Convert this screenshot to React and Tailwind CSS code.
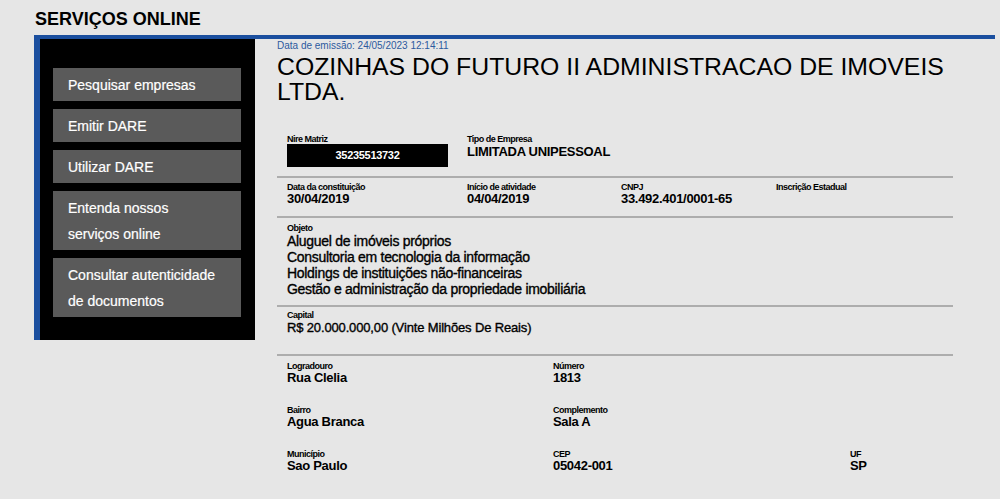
import React from 'react';

const menu = [
  ['Pesquisar empresas'],
  ['Emitir DARE'],
  ['Utilizar DARE'],
  ['Entenda nossos', 'serviços online'],
  ['Consultar autenticidade', 'de documentos'],
];

const objeto = [
  'Aluguel de imóveis próprios',
  'Consultoria em tecnologia da informação',
  'Holdings de instituições não-financeiras',
  'Gestão e administração da propriedade imobiliária',
];

function Label({ children }) {
  return <div className="text-[9px] leading-[10px] font-bold tracking-[-0.5px] text-black">{children}</div>;
}

function Field({ label, value, w }) {
  return (
    <div className={w}>
      <Label>{label}</Label>
      <div className="text-[13px] leading-[13px] font-bold tracking-[-0.3px] text-black h-[13px]">{value}</div>
    </div>
  );
}

export default function App() {
  const sec = 'border-t-2 border-[#adadad] px-[10px]';

  return (
    <div className="min-h-screen bg-[#e6e6e6] font-['Liberation_Sans',Arial,Helvetica,sans-serif] text-black">
      <h1 className="pl-[35px] pt-[9px] mb-[6px] text-[18px] leading-[20px] font-bold">SERVIÇOS ONLINE</h1>

      <div className="ml-[34px] w-[961px] border-t-4 border-[#1b4f9f] flex items-start">
        {/* Sidebar */}
        <div className="w-[221px] shrink-0 border-l-[6px] border-[#1b4f9f] bg-black pt-[29px] pb-[23px] pl-[13px] pr-[14px] flex flex-col gap-[8px]">
          {menu.map((m, i) => (
            <div key={i} className="bg-[#5a5a5a] text-white text-[14px] leading-[26px] pl-[15px] pt-[4px] pb-[3px] [-webkit-text-stroke:0.2px_white]">
              {m.map((l, j) => <div key={j}>{l}</div>)}
            </div>
          ))}
        </div>

        {/* Conteudo */}
        <div className="ml-[22px] w-[676px] pt-[1px]">
          <div className="text-[10px] leading-[12px] text-[#2d5a9e]">Data de emissão: 24/05/2023 12:14:11</div>
          <div className="mt-[2px] text-[24.8px] leading-[25px]">COZINHAS DO FUTURO II ADMINISTRACAO DE IMOVEIS LTDA.</div>

          <div className="px-[10px] pt-[30px] pb-[9px] flex">
            <div className="w-[180px]">
              <Label>Nire Matriz</Label>
              <div className="w-[161px] h-[23px] bg-black text-white text-[11px] font-bold tracking-[-0.3px] flex items-center justify-center">35235513732</div>
            </div>
            <div>
              <Label>Tipo de Empresa</Label>
              <div className="text-[13px] leading-[15px] font-bold tracking-[-0.3px]">LIMITADA UNIPESSOAL</div>
            </div>
          </div>

          <div className={`${sec} pt-[4px] pb-[11px] flex`}>
            <Field w="w-[180px]" label="Data da constituição" value="30/04/2019" />
            <Field w="w-[154px]" label="Início de atividade" value="04/04/2019" />
            <Field w="w-[155px]" label="CNPJ" value="33.492.401/0001-65" />
            <Field w="" label="Inscrição Estadual" value="" />
          </div>

          <div className={`${sec} pt-[5px] pb-[8px]`}>
            <Label>Objeto</Label>
            {objeto.map(o => (
              <div key={o} className="text-[14px] leading-[16px] tracking-[-0.3px] [-webkit-text-stroke:0.35px_black]">{o}</div>
            ))}
          </div>

          <div className={`${sec} pt-[3px] pb-[19px]`}>
            <Label>Capital</Label>
            <div className="text-[13px] leading-[15px] tracking-[-0.15px] [-webkit-text-stroke:0.35px_black]">R$ 20.000.000,00 (Vinte Milhões De Reais)</div>
          </div>

          <div className={`${sec} pt-[5px] flex flex-col gap-[21px]`}>
            <div className="flex">
              <Field w="w-[266px]" label="Logradouro" value="Rua Clelia" />
              <Field w="w-[297px]" label="Número" value="1813" />
            </div>
            <div className="flex">
              <Field w="w-[266px]" label="Bairro" value="Agua Branca" />
              <Field w="w-[297px]" label="Complemento" value="Sala A" />
            </div>
            <div className="flex">
              <Field w="w-[266px]" label="Município" value="Sao Paulo" />
              <Field w="w-[297px]" label="CEP" value="05042-001" />
              <Field w="" label="UF" value="SP" />
            </div>
          </div>
        </div>
      </div>
    </div>
  );
}
